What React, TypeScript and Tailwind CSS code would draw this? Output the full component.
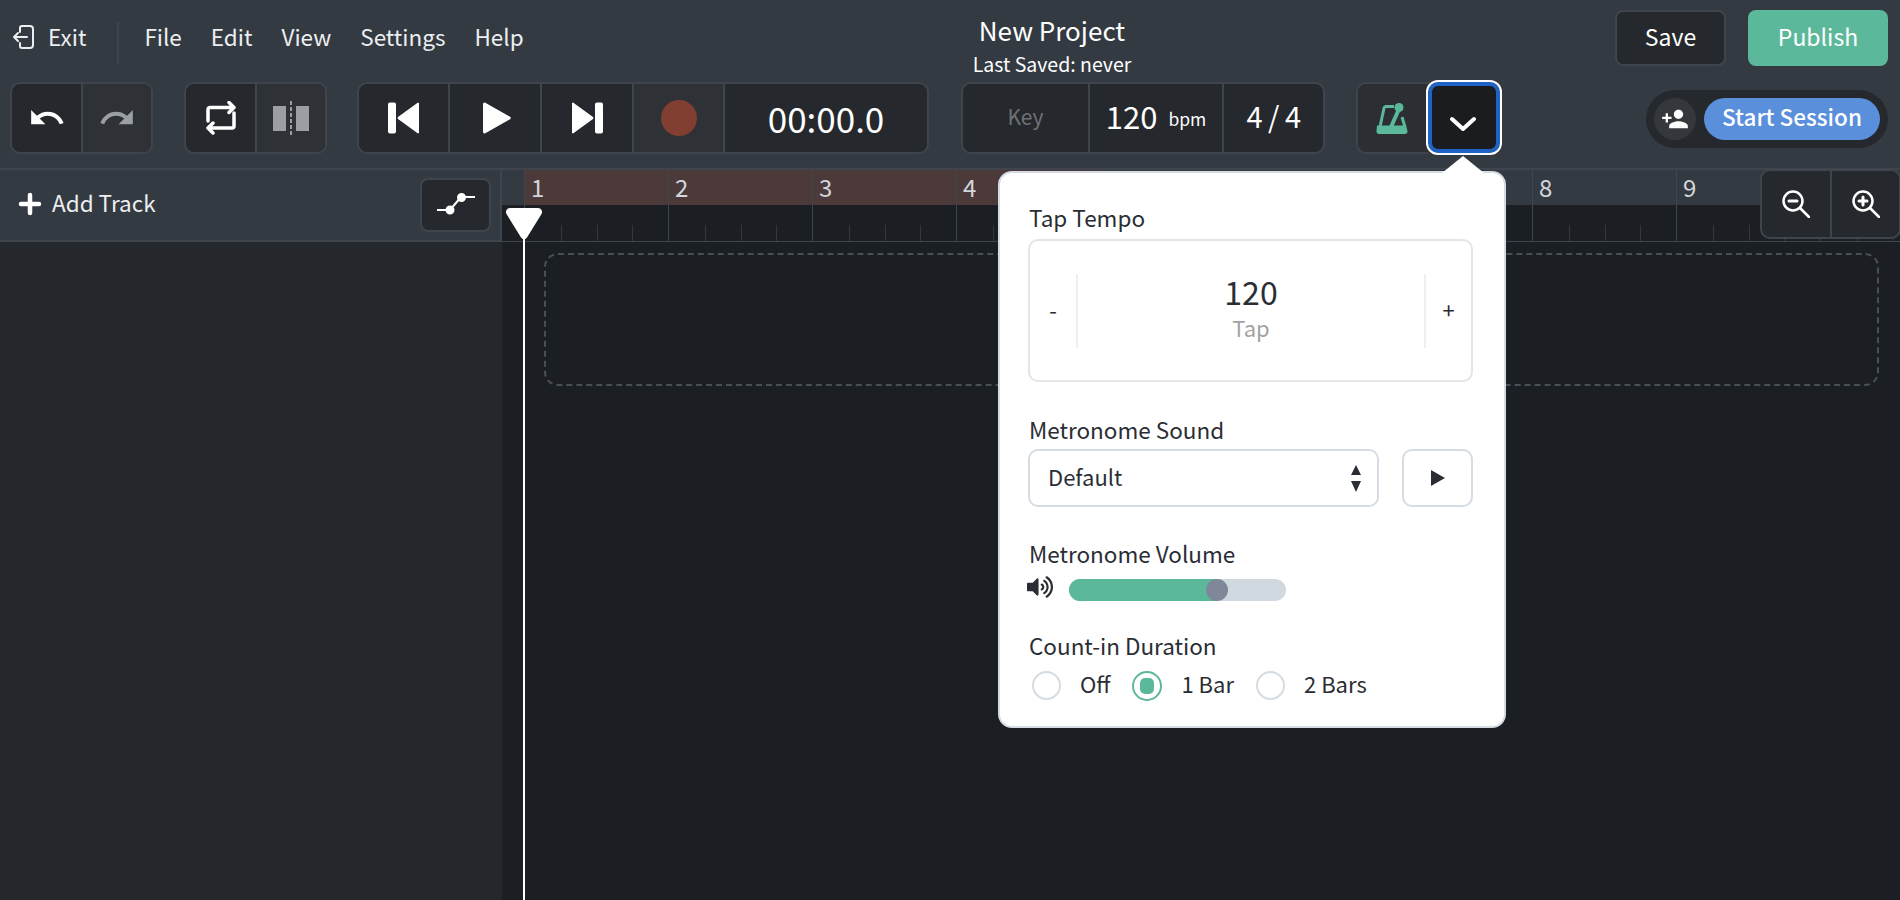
import { FaVolumeUp } from "react-icons/fa";
import { MdPersonAdd, MdRedo, MdUndo } from "react-icons/md";

const GREEN = "#5bb89b";

function ExitIcon() {
  return (
    <svg width="22" height="24" viewBox="0 0 22 24" fill="none" stroke="currentColor" strokeWidth="2" strokeLinecap="round" strokeLinejoin="round">
      <path d="M8 7V3a2 2 0 0 1 2-2h8a3 3 0 0 1 3 3v16a3 3 0 0 1-3 3h-8a2 2 0 0 1-2-2v-3" />
      <path d="M15 12H2M6 8l-4 4 4 4" />
    </svg>
  );
}

function RepeatIcon() {
  return (
    <svg width="30" height="34" viewBox="0 0 30 34" fill="none" stroke="white" strokeWidth="3.500" strokeLinecap="round" strokeLinejoin="round">
      <path d="M2 20V8.500a2 2 0 0 1 2-2h24M23 1.500l5 5-5 5" />
      <path d="M28 12v13a2 2 0 0 1-2 2H2M7 22l-5 5 5 5" />
    </svg>
  );
}

function SplitIcon() {
  return (
    <svg width="36" height="34" viewBox="0 0 36 34" fill="#9b9fa3">
      <rect x="0" y="5" width="13" height="25" />
      <rect x="23" y="5" width="13" height="25" />
      <path d="M18 0v34" stroke="#9b9fa3" strokeWidth="2" strokeDasharray="4 2" />
    </svg>
  );
}

function SkipIcon({ flip }: { flip?: boolean }) {
  return (
    <svg width="32" height="32" viewBox="0 0 32 32" fill="white" className={flip ? "-scale-x-100" : ""}>
      <rect x="0" y="0.5" width="8" height="31" rx="2" />
      <path d="M31 1.600v28.800a1 1 0 0 1-1.700.7L10 17a1.500 1.500 0 0 1 0-2L29.300.9a1 1 0 0 1 1.700.7z" />
    </svg>
  );
}

function PlayIcon() {
  return (
    <svg width="28" height="32" viewBox="0 0 28 32" fill="white" className="ml-[3px]">
      <path d="M0 2v28a1.500 1.500 0 0 0 2.300 1.200L27 17.300a1.500 1.500 0 0 0 0-2.600L2.300.8A1.500 1.500 0 0 0 0 2z" />
    </svg>
  );
}

function MetronomeIcon() {
  return (
    <svg width="32" height="31" viewBox="0 0 32 31" fill={GREEN} className="mr-[3px]">
      <path d="M1 22.500h29l1.500 5.500a2.500 2.500 0 0 1-2.500 3H3a2.500 2.500 0 0 1-2.500-3z" />
      <path d="M4 24 8 5a2 2 0 0 1 2-1.500h8M26 14l3 10" fill="none" stroke={GREEN} strokeWidth="3" />
      <path d="M15 24l8-18" fill="none" stroke={GREEN} strokeWidth="4" />
      <circle cx="23" cy="4.500" r="4.500" />
    </svg>
  );
}

function AutomationIcon() {
  return (
    <svg width="38" height="24" viewBox="0 0 38 24" fill="white" stroke="white" strokeWidth="2">
      <path d="M0 17h13M13 17l11-13M24 4h14" fill="none" />
      <circle cx="13" cy="17" r="3.500" />
      <circle cx="24.500" cy="4.500" r="3.500" />
    </svg>
  );
}

function ZoomIcon({ plus }: { plus?: boolean }) {
  return (
    <svg width="28" height="28" viewBox="0 0 28 28" fill="none" stroke="white" strokeWidth="2.500" strokeLinecap="round">
      <circle cx="11" cy="11" r="9.500" />
      <path d="M18 18l9 9" />
      <path d="M7 11h8" strokeWidth="3" />
      {plus && <path d="M11 7v8" strokeWidth="3" />}
    </svg>
  );
}

function ToolGroup({ children }: { children: React.ReactNode }) {
  return <div className="flex h-[72px] overflow-hidden rounded-[10px] border-2 border-[#3f444d] bg-[#25282c]">{children}</div>;
}

function ToolCell({ className, children }: { className: string; children: React.ReactNode }) {
  return <div className={"flex h-full items-center justify-center border-r-2 border-[#3f444d] last:border-r-0 " + className}>{children}</div>;
}

function Label({ children }: { children: React.ReactNode }) {
  return <div className="h-[28px] pl-[1px] text-[22.500px] leading-[24px] text-[#2a2e34]">{children}</div>;
}

function Bar({ n, loop }: { n: number; loop: boolean }) {
  return (
    <div className="w-[144px] shrink-0 border-l border-[#41454c] first:border-l-0">
      <div className={"h-[35px] pl-[6px] text-[24px] leading-[33px] text-[#d2d6dc] " + (loop ? "bg-[#4c3a3a]" : "")}>{n}</div>
      <div className="flex h-[36px] bg-[#1b1e22]">
        {[0, 1, 2, 3].map((i) => (
          <div key={i} className="flex w-[36px] items-end">
            {i > 0 && <div className="h-[16px] w-px bg-[#34383e]" />}
          </div>
        ))}
      </div>
    </div>
  );
}

function Radio({ label, checked }: { label: string; checked?: boolean }) {
  return (
    <div className="flex items-center text-[22px] leading-[30px] text-[#2a2e34]">
      {checked ? (
        <div className="flex h-[30px] w-[30px] items-center justify-center rounded-full border-2 border-[#5bb89b]">
          <div className="h-[16px] w-[14px] rounded-[5px] bg-[#5bb89b]" />
        </div>
      ) : (
        <div className="h-[29px] w-[29px] rounded-full border-2 border-[#d5dce3]" />
      )}
      <span className="ml-[19px] pb-[5px]">{label}</span>
    </div>
  );
}

function MetronomePopover() {
  return (
    <div className="absolute left-[998px] top-[171px] h-[557px] w-[508px] rounded-[14px] border-2 border-[#d5dce3] bg-white px-[28px] pt-[32px]">
      <svg width="42" height="17" viewBox="0 0 42 17" fill="white" className="absolute left-[442px] top-[-17px]">
        <path d="M0 17 21 0l21 17z" />
      </svg>

      <Label>Tap Tempo</Label>
      <div className="mt-[6px] flex h-[143px] w-[445px] items-center rounded-[10px] border-2 border-[#e3e5e7] text-[#2a2e34]">
        <div className="w-[46px] pb-[4px] text-center text-[22px] leading-[30px]">-</div>
        <div className="flex h-[74px] flex-1 flex-col items-center justify-center border-x-2 border-[#eeeff0] pb-[10px]">
          <div className="text-[32px] leading-[42px]">120</div>
          <div className="text-[22px] leading-[30px] text-[#a3a3a3]">Tap</div>
        </div>
        <div className="w-[45px] pb-[4px] text-center text-[22px] leading-[30px]">+</div>
      </div>

      <div className="mt-[35px]">
        <Label>Metronome Sound</Label>
      </div>
      <div className="mt-[4px] flex h-[58px] gap-[23px]">
        <div className="flex w-[351px] items-center justify-between rounded-[10px] border-2 border-[#d5dce3] pl-[18px] pr-[16px] text-[22px] text-[#2a2e34]">
          <span className="pb-[4px]">Default</span>
          <svg width="10" height="27" viewBox="0 0 10 27" fill="#2a2e34">
            <path d="M5 0l5 10H0zM0 16h10L5 27z" />
          </svg>
        </div>
        <div className="flex w-[71px] items-center justify-center rounded-[10px] border-2 border-[#d5dce3]">
          <svg width="14" height="16" viewBox="0 0 14 16" fill="#2a2e34">
            <path d="M0 0l14 8-14 8z" />
          </svg>
        </div>
      </div>

      <div className="mt-[34px]">
        <Label>Metronome Volume</Label>
      </div>
      <div className="mt-[10px] flex h-[22px] items-center text-[#2a2e34]">
        <FaVolumeUp size={26} className="ml-[-1px] mt-[-6px]" />
        <div className="ml-[16px] flex h-[22px] w-[217px] rounded-full bg-[#d1d9e0]">
          <div className="h-full w-[148px] rounded-l-full bg-[#5bb89b]" />
          <div className="ml-[-11px] h-[22px] w-[22px] rounded-full bg-[#7f8898]" />
        </div>
      </div>

      <div className="mt-[32px]">
        <Label>Count-in Duration</Label>
      </div>
      <div className="mt-[7px] flex items-center gap-[22px] pl-[4px]">
        <Radio label="Off" />
        <Radio label="1 Bar" checked />
        <Radio label="2 Bars" />
      </div>
    </div>
  );
}

export default function App() {
  return (
    <div className="relative h-[900px] w-[1900px] overflow-hidden bg-[#1b1e22] font-['Noto_Sans_CJK_JP','Noto_Sans',sans-serif] text-white">
      <header className="h-[170px] border-b-2 border-[#3f444d] bg-[#343a42]">
        <div className="flex h-[82px] items-start">
          <div className="flex w-[932px] items-center pt-[8px] text-[22.500px] leading-[32px] text-[#eceef0]">
            <div className="ml-[12px] mt-[2px] flex items-center gap-[14px]">
              <ExitIcon />
              <span className="pb-[2px]">Exit</span>
            </div>
            <div className="ml-[31px] mt-[14px] h-[42px] w-[2px] bg-[#3f444d]" />
            <nav className="ml-[25px] flex gap-[29px]">
              <span>File</span>
              <span>Edit</span>
              <span>View</span>
              <span>Settings</span>
              <span>Help</span>
            </nav>
          </div>
          <div className="w-[240px] pt-[13px] text-center">
            <div className="text-[26px] leading-[34px]">New Project</div>
            <div className="mt-[4px] text-[19.500px] leading-[26px]">Last Saved: never</div>
          </div>
          <div className="ml-auto flex gap-[22px] pr-[12px] pt-[10px] text-[23px]">
            <div className="flex h-[56px] w-[111px] items-center justify-center rounded-[8px] border-2 border-[#3f444d] bg-[#25282c] pb-[4px]">Save</div>
            <div className="flex h-[56px] w-[140px] items-center justify-center rounded-[8px] bg-[#5bb89b] pb-[4px]">Publish</div>
          </div>
        </div>

        <div className="flex items-start pl-[10px] pr-[12px]">
          <ToolGroup>
            <ToolCell className="w-[71px]">
              <MdUndo size={38} />
            </ToolCell>
            <ToolCell className="w-[68px] bg-[#2e3236] text-[#9b9fa3]">
              <MdRedo size={38} />
            </ToolCell>
          </ToolGroup>
          <div className="ml-[31px]">
            <ToolGroup>
              <ToolCell className="w-[71px]">
                <RepeatIcon />
              </ToolCell>
              <ToolCell className="w-[68px] bg-[#2e3236]">
                <SplitIcon />
              </ToolCell>
            </ToolGroup>
          </div>
          <div className="ml-[30px]">
            <ToolGroup>
              <ToolCell className="w-[91px]">
                <SkipIcon />
              </ToolCell>
              <ToolCell className="w-[92px]">
                <PlayIcon />
              </ToolCell>
              <ToolCell className="w-[92px]">
                <SkipIcon flip />
              </ToolCell>
              <ToolCell className="w-[91px] bg-[#2e3236]">
                <div className="h-[36px] w-[36px] rounded-full bg-[#823f31]" />
              </ToolCell>
              <ToolCell className="w-[202px] text-[35px]">00:00.0</ToolCell>
            </ToolGroup>
          </div>
          <div className="ml-[32px]">
            <ToolGroup>
              <ToolCell className="w-[127px] pb-[3px] text-[21px] text-[#6e7175]">Key</ToolCell>
              <ToolCell className="w-[134px] pb-[4px] text-[31px]">
                120<span className="ml-[11px] mt-[7px] text-[17.500px]">bpm</span>
              </ToolCell>
              <ToolCell className="w-[99px] pb-[4px] text-[29px] tracking-[-0.5px]">4 / 4</ToolCell>
            </ToolGroup>
          </div>
          <div className="relative ml-[31px] flex items-start">
            <div className="flex h-[72px] w-[72px] items-center justify-center rounded-l-[10px] border-2 border-r-0 border-[#3f444d] bg-[#2b2e32]">
              <MetronomeIcon />
            </div>
            <div className="flex h-[71px] w-[72px] items-center justify-center rounded-[10px] border-4 border-[#1f63c7] bg-[#1b1c20] outline-2 outline-white">
              <svg width="26" height="16" viewBox="0 0 26 16" fill="none" stroke="white" strokeWidth="4" strokeLinecap="round" strokeLinejoin="round" className="mr-[2px] mt-[12px]">
                <path d="M2 3l11 10L24 3" />
              </svg>
            </div>
          </div>
          <div className="ml-auto mt-[8px] flex h-[58px] w-[242px] items-center gap-[8px] rounded-full bg-[#25282c] pl-[8px]">
            <div className="flex h-[42px] w-[42px] items-center justify-center rounded-full bg-[#34373c]">
              <MdPersonAdd size={28} />
            </div>
            <div className="flex h-[42px] w-[176px] items-center justify-center rounded-full bg-[#5a8fdc] pb-[4px] text-[22.500px] font-medium">Start Session</div>
          </div>
        </div>
      </header>

      <div className="flex h-[72px] border-b-2 border-[#3f444d]">
        <div className="flex w-[502px] shrink-0 items-center justify-between border-r-2 border-[#3f444d] bg-[#343a42] pl-[18px] pr-[9px]">
          <div className="flex items-center gap-[10px] text-[22.500px] text-[#eceef0]">
            <svg width="24" height="24" viewBox="0 0 24 24" fill="none" stroke="white" strokeWidth="4.500" strokeLinecap="round" className="mt-[-2px]">
              <path d="M12 3v18M3 12h18" />
            </svg>
            <span className="pb-[5px]">Add Track</span>
          </div>
          <div className="flex h-[54px] w-[71px] items-center justify-center rounded-[8px] border-2 border-[#3f444d] bg-[#25282c]">
            <AutomationIcon />
          </div>
        </div>
        <div className="flex min-w-0 flex-1 bg-[#343a42]">
          <div className="w-[22px] shrink-0">
            <div className="h-[35px]" />
            <div className="h-[36px] bg-[#1b1e22]" />
          </div>
          {[1, 2, 3, 4, 5, 6, 7, 8, 9, 10].map((n) => (
            <Bar key={n} n={n} loop={n <= 4} />
          ))}
        </div>
      </div>

      <div className="flex h-[658px]">
        <div className="w-[502px] shrink-0 bg-[#24272b]" />
        <div className="flex-1 pl-[42px] pr-[21px] pt-[11px]">
          <div className="h-[133px] rounded-[14px] border-2 border-dashed border-[#4a4e55]" />
        </div>
      </div>

      <div className="absolute left-[523px] top-[238px] h-[662px] w-[2px] bg-white" />
      <svg width="36" height="32" viewBox="0 0 36 32" fill="white" className="absolute left-[506px] top-[208px]">
        <path d="M4 0h28a4 4 0 0 1 3.500 6L21 29.500a3.500 3.500 0 0 1-6 0L.500 6A4 4 0 0 1 4 0z" />
      </svg>

      <div className="absolute left-[1760px] top-[169px] flex h-[70px] w-[141px] overflow-hidden rounded-[10px] border-2 border-[#3f444d] bg-[#25282c]">
        <div className="flex w-[70px] items-center justify-center border-r-2 border-[#3f444d]">
          <ZoomIcon />
        </div>
        <div className="flex flex-1 items-center justify-center">
          <ZoomIcon plus />
        </div>
      </div>

      <MetronomePopover />
    </div>
  );
}
